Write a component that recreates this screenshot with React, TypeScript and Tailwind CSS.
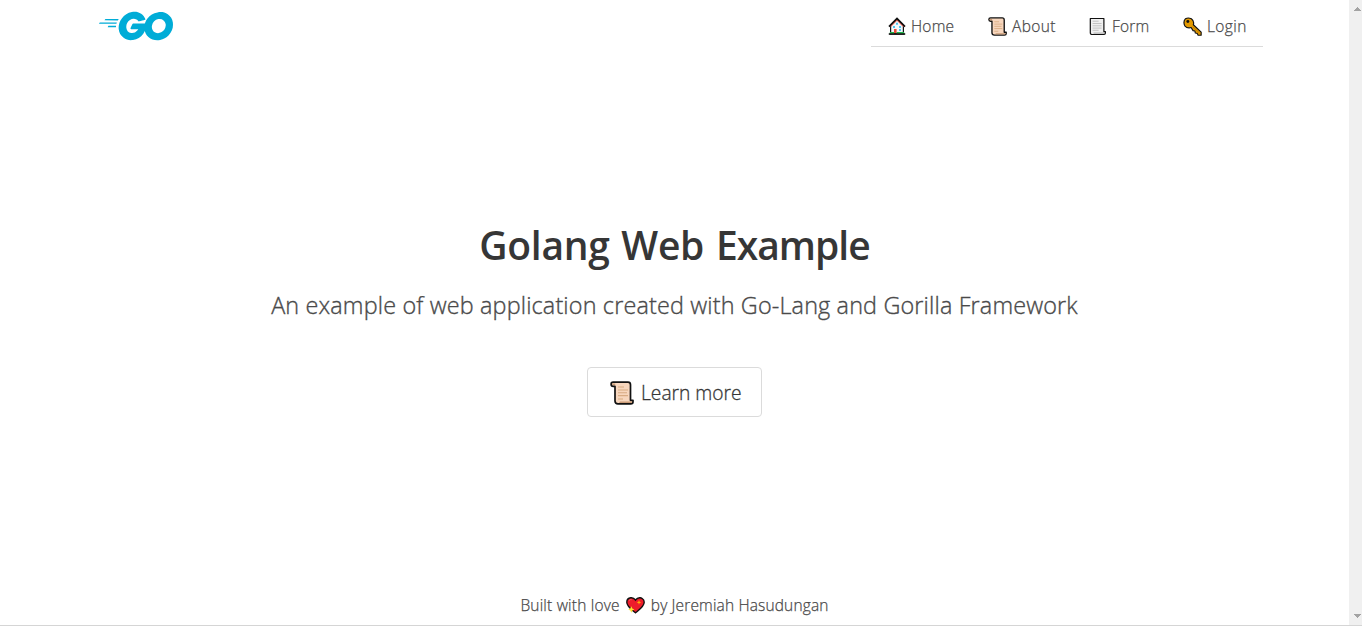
import React from "react";

function GoLogo() {
  return (
    <svg className="block h-[30px] w-[74px]" preserveAspectRatio="none" viewBox="0 -2 205.4 80.7" fill="#00acd7" aria-label="Go">
      <path d="M15.5 23.2c-.4 0-.5-.2-.3-.5l2.1-2.7c.2-.3.7-.5 1.1-.5h35.7c.4 0 .5.3.3.6l-1.7 2.6c-.2.3-.7.6-1 .6l-36.2-.1zM.4 32.4c-.4 0-.5-.2-.3-.5l2.1-2.7c.2-.3.7-.5 1.1-.5h45.6c.4 0 .6.3.5.6l-.8 2.4c-.1.4-.5.6-.9.6l-47.3.1zM24.6 41.6c-.4 0-.5-.3-.3-.6l1.4-2.5c.2-.3.6-.6 1-.6h20c.4 0 .6.3.6.7l-.2 2.4c0 .4-.4.7-.7.7l-21.8-.1zM128.4 21.4c-6.3 1.6-10.6 2.8-16.8 4.4-1.5.4-1.6.5-2.9-1-1.5-1.7-2.6-2.8-4.7-3.8-6.3-3.1-12.4-2.2-18.1 1.5-6.8 4.4-10.3 10.9-10.2 19 .1 8 5.6 14.6 13.5 15.7 6.8.9 12.5-1.5 17-6.6.9-1.1 1.7-2.3 2.7-3.7H89.6c-2.1 0-2.6-1.3-1.9-3 1.3-3.1 3.7-8.3 5.1-10.9.3-.6 1-1.6 2.5-1.6h36.4c-.2 2.7-.2 5.4-.6 8.1-1.1 7.2-3.8 13.8-8.2 19.6-7.2 9.5-16.6 15.4-28.5 17-9.8 1.3-18.9-.6-26.9-6.6-7.4-5.6-11.6-13-12.7-22.2-1.3-10.9 1.9-20.7 8.5-29.3C70.4 8.7 79.8 2.8 91.1.7c9.2-1.7 18-.6 26 4.8 5.2 3.5 9 8.2 11.5 13.9.5.9.1 1.6-.2 2z" />
      <path fillRule="evenodd" d="M161.5 76.7c-9.1-.2-17.4-2.8-24.4-8.8-5.9-5.1-9.6-11.6-10.8-19.3-1.8-11.3 1.3-21.3 8.1-30.2C141.7 8.8 150.5 3.8 162.4 1.7c10.2-1.8 19.8-.8 28.5 5.1 7.9 5.4 12.8 12.7 14.1 22.3 1.7 13.5-2.2 24.5-11.5 33.9-6.6 6.7-14.7 10.9-24 12.8-2.7.5-5.4.6-8 .9zm23.8-40.4c-.1-1.3-.1-2.3-.3-3.3-1.8-9.9-10.9-15.5-20.4-13.3-9.3 2.1-15.3 8-17.5 17.4-1.8 7.8 2 15.7 9.2 18.9 5.5 2.4 11 2.1 16.3-.6 7.9-4.1 12.2-10.5 12.7-19.1z" />
    </svg>
  );
}

function House({ className = "" }: { className?: string }) {
  return (
    <svg className={className} viewBox="0 0 18 18">
      <path d="M2.6 8.5 9 2.2l6.4 6.3v8.3H2.6z" fill="#f1f6fa" stroke="#111" strokeWidth="1.2" />
      <path d="m1 9.6 8-8 8 8" fill="none" stroke="#111" strokeWidth="1.8" />
      <path d="m2.6 9.7 6.4-6.4 6.4 6.4" fill="none" stroke="#e54b3e" strokeWidth="1" />
      <path d="M8 5.8h2v2H8zM5 9h2v2H5zM11 9h2v2h-2zM11 12h2v2h-2z" fill="#4ec2ef" />
      <path d="M6 12h2.6v4H6z" fill="#eb4a37" />
      <path d="M.8 17h16.4" stroke="#111" strokeWidth="1.7" />
      <path d="M1.8 15.7H6m2.6 0h7.6" stroke="#21b64b" strokeWidth="1.3" />
    </svg>
  );
}

function Scroll({ className = "" }: { className?: string }) {
  return (
    <svg className={className} viewBox="0 0 24 24" stroke="#111" strokeWidth="1.7" strokeLinejoin="round">
      <path d="M5 5.4H3.2C1.8 5.4 1.1 4.4 1.1 3.2S2 1.2 3.2 1.2H18q2.5 0 2.5 2.6v15.5H23V21q0 1.8-2.3 1.8H8Q5 22.8 5 20Z" fill="#f7d6bd" />
      <path d="M2.1 2.5h3.1v1.6H2.3zM10 20.5h12v1.4H9Z" fill="#c99a76" stroke="none" />
      <path d="M8 6h6M8 9h10M8 11.8h9M8 14.6h10M8 18h5" stroke="#d8ab82" strokeWidth="1.1" />
    </svg>
  );
}

function Page({ className = "" }: { className?: string }) {
  return (
    <svg className={className} viewBox="0 0 18 18" stroke="#111" strokeWidth="1.2" strokeLinejoin="round">
      <path d="M1.3 1h13.6v13.2h1.5v1.4q0 1.4-1.4 1.4H3.1q-1.8 0-1.8-1.8Z" fill="#f0f0f0" />
      <path d="M4.5 15.6H15" stroke="#aaa" strokeWidth="1" />
      <path d="M3.6 3.7h6M3.6 6h9M3.6 8.3h9M3.6 10.6h9M3.6 12.8h6" stroke="#bdbdbd" strokeWidth=".9" />
    </svg>
  );
}

function Key({ className = "" }: { className?: string }) {
  return (
    <svg className={className} viewBox="0 0 18 18">
      <path d="M2.4 1.6Q5 .2 7.9 1.7q3 2.2 1.9 5.6l7.4 7v3h-2.9l-.8-1.8-1.8-.3-.4-1.9-1.8-.4-1.8-2.9Q4 11 1.7 8.3-.2 4.3 2.4 1.6Z" fill="#e49a00" stroke="#111" strokeWidth="1.1" strokeLinejoin="round" />
      <circle cx="4.6" cy="4.2" r="1.4" fill="#111" />
      <path d="m9.2 9.2 6.5 6" stroke="#a96d00" strokeWidth=".6" />
    </svg>
  );
}

function Heart({ className = "" }: { className?: string }) {
  return (
    <svg className={className} viewBox="0 0 19 17">
      <path d="M9.5 3Q7.6.5 4.8.8.8 1.3.8 5.2c0 4.2 5 7.5 8.7 10.6 3.7-3.1 8.7-6.4 8.7-10.6 0-3.9-4-4.4-4-4.4Q11.4.5 9.5 3Z" fill="#ed1c2b" stroke="#111" strokeWidth="1.4" />
      <path d="m13 3 .6 1.7 1.8.6-1.8.6L13 7.7l-.6-1.8-1.8-.6 1.8-.6Z" fill="#ffb300" />
      <path d="m5.3 9.3 1 2.2 2.1 1-2.1 1-1 2.2-1-2.2-2.1-1 2.1-1Z" fill="#ffe52e" />
      <path d="M3 3.5q1.2-1.2 2.7-.8" fill="none" stroke="#ff6574" strokeWidth=".8" />
    </svg>
  );
}

export default function App() {
  return (
    <div className="flex h-[626px] w-[1362px] flex-col overflow-hidden bg-white font-['Open_Sans','Noto_Sans',sans-serif] text-[#4a4a4a]">
      <div className="flex h-[625px]">
        <div className="flex w-[1349px] flex-col">
          <header className="flex h-[52px] justify-between pr-[86px] pl-[99px]">
            <div className="pt-[11px]"><GoLogo /></div>
            <nav className="flex h-[47px] w-[392px] border-b border-[#dbdbdb] pt-[14px] pl-[17px] text-[15.5px] leading-6 font-light tracking-[0.2px] [-webkit-text-stroke:0.25px_#4a4a4a]">
              <a href="#home" className="flex w-[100px]"><House className="mt-[3px] mr-[5px] size-[18px] shrink-0" /><span>Home</span></a>
              <a href="#about" className="flex w-[101px]"><Scroll className="mt-[3px] mr-[5px] size-[19px] shrink-0" /><span className="tracking-[0.4px]">About</span></a>
              <a href="#form" className="flex w-[94px]"><Page className="mt-[3px] mr-[5px] h-[19px] w-[18px] shrink-0" /><span>Form</span></a>
              <a href="#login" className="flex"><Key className="mt-[3px] mr-[5px] h-[19px] w-[19px] shrink-0" /><span className="tracking-[0.4px]">Login</span></a>
            </nav>
          </header>
          <main className="flex grow flex-col items-center pt-[168px]">
            <h1 className="text-[39px] leading-[50px] font-semibold tracking-[-0.3px] whitespace-nowrap text-[#363636] [word-spacing:2px]">Golang Web <span className="tracking-[-1px]">Example</span></h1>
            <p className="mt-[19px] text-[23.4px] leading-[32px] font-light tracking-[0.15px] whitespace-nowrap [-webkit-text-stroke:0.35px_#4a4a4a]">An example of web application created with Go-Lang and Gorilla Framework</p>
            <button className="mt-[46px] flex h-[50px] w-[175px] items-center rounded-[4px] border border-[#dbdbdb] pl-[22px] text-[19.2px] font-light whitespace-nowrap text-[#363636] [-webkit-text-stroke:0.3px_#363636]">
              <Scroll className="mt-[2px] mr-[7px] size-6 shrink-0" /><span className="mt-[2px]">Learn more</span>
            </button>
          </main>
          <footer className="flex h-[32px] justify-center text-[15.5px] leading-6 font-light whitespace-nowrap [-webkit-text-stroke:0.25px_#4a4a4a]">
            <span className="tracking-[0.2px]">Built with love</span><Heart className="mx-[6px] mt-[4px] h-[17px] w-[19px]" /><span className="tracking-[0.15px]">by Jeremiah Hasudungan</span>
          </footer>
        </div>
        <div className="flex w-[13px] flex-col items-center justify-between bg-[#f0f0f0] pt-[7px] pb-[7px] pl-[4px]">
          <svg className="h-1 w-[7px]" viewBox="0 0 7 4" shapeRendering="crispEdges"><path d="M3 0h1v1h1v1h1v1h1v1H0V3h1V2h1V1h1z" fill="#a3a3a3" /></svg>
          <svg className="h-1 w-[7px]" viewBox="0 0 7 4" shapeRendering="crispEdges"><path d="M0 0h7v1H6v1H5v1H4v1H3V3H2V2H1V1H0z" fill="#a3a3a3" /></svg>
        </div>
      </div>
      <div className="h-px bg-[#d5d5d5]" />
    </div>
  );
}
